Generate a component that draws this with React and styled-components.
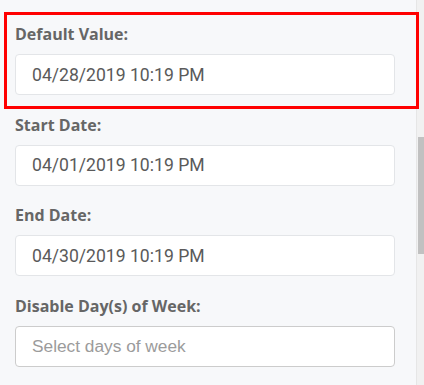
import React from 'react';
import styled, { createGlobalStyle } from 'styled-components';

const GlobalStyle = createGlobalStyle`
    html, body {
        margin: 0;
        padding: 0;
        background-color: #f7f8fa;
    }
`;

const Page = styled.div`
    position: relative;
    display: flex;
    width: 424px;
    height: 385px;
    overflow: hidden;
    background-color: #f7f8fa;
`;

const Panel = styled.section`
    flex: 1;
    display: flex;
    flex-direction: column;
    gap: 18.7px;
    padding: 23px 21px 0 15px;
`;

const FieldGroup = styled.div`
    display: flex;
    flex-direction: column;
`;

const Label = styled.label`
    display: block;
    margin-bottom: 9px;
    font-family: 'Open Sans', 'DejaVu Sans', sans-serif;
    font-weight: 700;
    font-size: 16px;
    line-height: 22px;
    color: #666666;
`;

const StyledInput = styled.input`
    box-sizing: border-box;
    width: 100%;
    height: 41px;
    padding: 0 16px;
    outline: none;

    background-color: #ffffff;
    border: 1px solid ${p => (p.$select ? '#cccccc' : '#e3e5e8')};
    border-radius: 4px;

    font-family: ${p => (p.$select ? "'Liberation Sans', Arial, sans-serif" : "'Roboto', Arial, sans-serif")};
    font-size: ${p => (p.$select ? '17.3px' : '17.6px')};
    color: #5a5a5a;

    &::placeholder {
        color: #9b9b9b;
    }
`;

const ScrollTrack = styled.div`
    width: 7px;
    border-left: 1px solid #e6e6e6;
    background-color: #f1f1f1;
    display: flex;
    justify-content: flex-end;
`;

const ScrollThumb = styled.div`
    width: 6px;
    height: 117px;
    margin-top: 137px;
    background-color: #c1c1c1;
`;

const Highlight = styled.div`
    position: absolute;
    left: 4px;
    top: 12px;
    width: 409px;
    height: 91px;
    border: 3px solid #ff0000;
    pointer-events: none;
`;

const fields = [
    { label: 'Default Value:', value: '04/28/2019 10:19 PM' },
    { label: 'Start Date:', value: '04/01/2019 10:19 PM' },
    { label: 'End Date:', value: '04/30/2019 10:19 PM' },
];

const App = () => {
    return (
        <Page>
            <GlobalStyle />
            <Panel>
                {fields.map(f => (
                    <FieldGroup key={f.label}>
                        <Label>{f.label}</Label>
                        <StyledInput type="text" defaultValue={f.value} />
                    </FieldGroup>
                ))}
                <FieldGroup>
                    <Label>Disable Day(s) of Week:</Label>
                    <StyledInput $select type="text" placeholder="Select days of week" />
                </FieldGroup>
            </Panel>
            <ScrollTrack>
                <ScrollThumb />
            </ScrollTrack>
            <Highlight />
        </Page>
    );
};

export default App;
